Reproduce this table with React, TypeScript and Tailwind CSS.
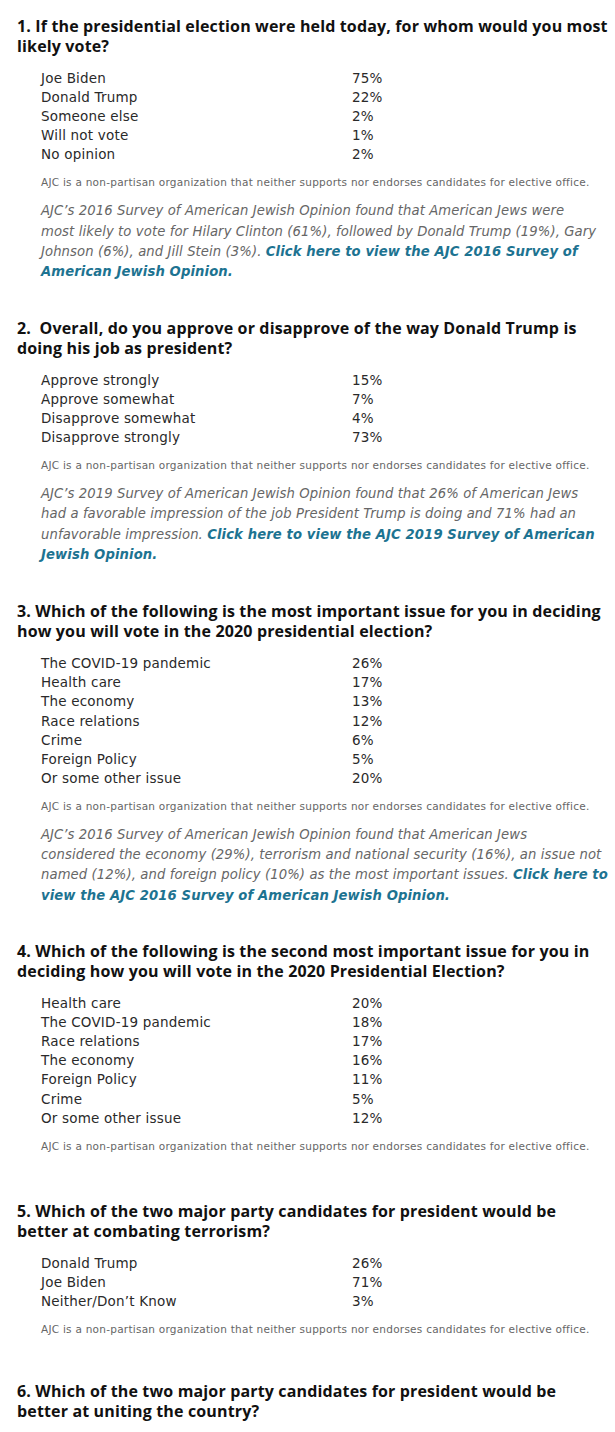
import React from 'react';

type Row = [string, string];
// each note line: [plain text, link text]
type NoteLine = [string, string];

type Question = {
  title: string;
  rows: Row[];
  note?: NoteLine[];
  gap: string;
};

const DISCLAIMER =
  'AJC is a non-partisan organization that neither supports nor endorses candidates for elective office.';

const questions: Question[] = [
  {
    title: '1. If the presidential election were held today, for whom would you most likely vote?',
    rows: [
      ['Joe Biden', '75%'],
      ['Donald Trump', '22%'],
      ['Someone else', '2%'],
      ['Will not vote', '1%'],
      ['No opinion', '2%'],
    ],
    note: [
      ['AJC’s 2016 Survey of American Jewish Opinion found that American Jews were', ''],
      ['most likely to vote for Hilary Clinton (61%), followed by Donald Trump (19%), Gary', ''],
      ['Johnson (6%), and Jill Stein (3%). ', 'Click here to view the AJC 2016 Survey of'],
      ['', 'American Jewish Opinion.'],
    ],
    gap: 'mb-[35px]',
  },
  {
    title: '2.\u00a0 Overall, do you approve or disapprove of the way Donald Trump is doing his job as president?',
    rows: [
      ['Approve strongly', '15%'],
      ['Approve somewhat', '7%'],
      ['Disapprove somewhat', '4%'],
      ['Disapprove strongly', '73%'],
    ],
    note: [
      ['AJC’s 2019 Survey of American Jewish Opinion found that 26% of American Jews', ''],
      ['had a favorable impression of the job President Trump is doing and 71% had an', ''],
      ['unfavorable impression. ', 'Click here to view the AJC 2019 Survey of American'],
      ['', 'Jewish Opinion.'],
    ],
    gap: 'mb-[36px]',
  },
  {
    title:
      '3. Which of the following is the most important issue for you in deciding how you will vote in the 2020 presidential election?',
    rows: [
      ['The COVID-19 pandemic', '26%'],
      ['Health care', '17%'],
      ['The economy', '13%'],
      ['Race relations', '12%'],
      ['Crime', '6%'],
      ['Foreign Policy', '5%'],
      ['Or some other issue', '20%'],
    ],
    note: [
      ['AJC’s 2016 Survey of American Jewish Opinion found that American Jews', ''],
      ['considered the economy (29%), terrorism and national security (16%), an issue not', ''],
      ['named (12%), and foreign policy (10%) as the most important issues. ', 'Click here to'],
      ['', 'view the AJC 2016 Survey of American Jewish Opinion.'],
    ],
    gap: 'mb-[35px]',
  },
  {
    title:
      '4. Which of the following is the second most important issue for you in deciding how you will vote in the 2020 Presidential Election?',
    rows: [
      ['Health care', '20%'],
      ['The COVID-19 pandemic', '18%'],
      ['Race relations', '17%'],
      ['The economy', '16%'],
      ['Foreign Policy', '11%'],
      ['Crime', '5%'],
      ['Or some other issue', '12%'],
    ],
    gap: 'mb-[47px]',
  },
  {
    title: '5. Which of the two major party candidates for president would be better at combating terrorism?',
    rows: [
      ['Donald Trump', '26%'],
      ['Joe Biden', '71%'],
      ['Neither/Don’t Know', '3%'],
    ],
    gap: 'mb-[44px]',
  },
  {
    title: '6. Which of the two major party candidates for president would be better at uniting the country?',
    rows: [],
    gap: 'mb-[40px]',
  },
];

export default function App() {
  return (
    <div className="min-h-screen bg-white pl-[17px] pt-4">
      {questions.map((q, i) => (
        <section key={i} className={q.gap}>
          <h2 className="pr-[5px] font-['Open_Sans',sans-serif] text-[16px] font-bold leading-[20px] text-[#111] tracking-[0.15px]">
            {q.title}
          </h2>

          {q.rows.length > 0 && (
            <div className="mt-[13px] pl-[24px] font-['DejaVu_Sans',sans-serif]">
              {q.rows.map(([label, pct]) => (
                <div key={label} className="flex text-[13.5px] leading-[19.1px] text-[#2a2a2a] tracking-[0.2px]">
                  <span className="w-[311px]">{label}</span>
                  <span>{pct}</span>
                </div>
              ))}

              <p className="mt-[10px] text-[10.5px] leading-[16px] text-[#666] tracking-[0.25px]">{DISCLAIMER}</p>

              {q.note && (
                <div className="mt-[11px] text-[13.2px] italic leading-[20.3px] text-[#666] tracking-[0.1px]">
                  {q.note.map(([plain, link], j) => (
                    <div key={j} className="whitespace-pre">
                      {plain}
                      {link && (
                        <a href="#" className="font-bold text-[#1d7391]">
                          {link}
                        </a>
                      )}
                    </div>
                  ))}
                </div>
              )}
            </div>
          )}
        </section>
      ))}
    </div>
  );
}
